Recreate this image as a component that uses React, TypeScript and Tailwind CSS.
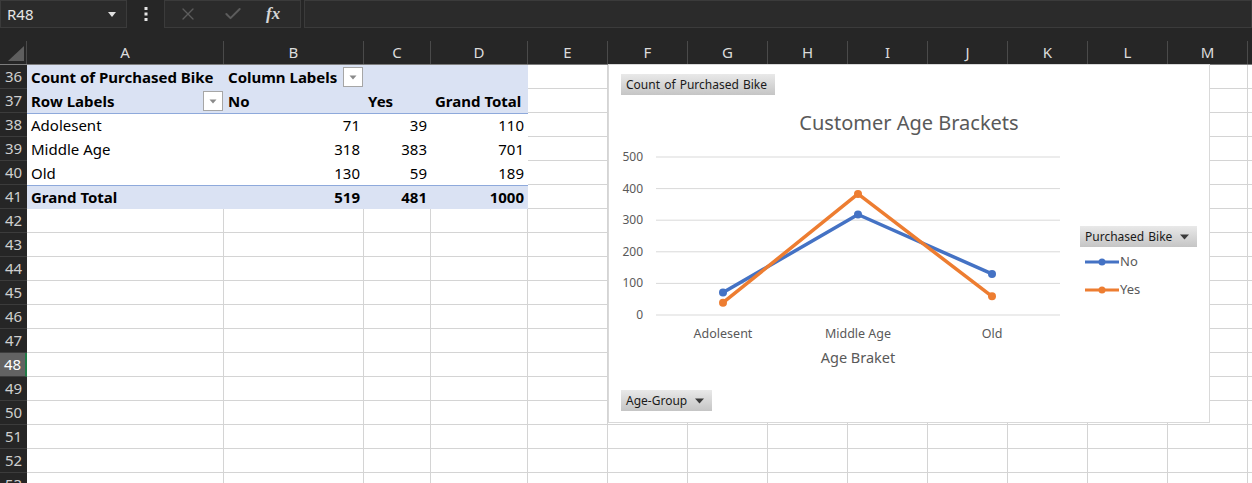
import React from 'react';
import { X, Check } from 'lucide-react';

const COLS = [
  { key: 'A', w: 197 },
  { key: 'B', w: 140 },
  { key: 'C', w: 67 },
  { key: 'D', w: 97 },
  { key: 'E', w: 80 },
  { key: 'F', w: 80 },
  { key: 'G', w: 80 },
  { key: 'H', w: 80 },
  { key: 'I', w: 80 },
  { key: 'J', w: 80 },
  { key: 'K', w: 80 },
  { key: 'L', w: 80 },
  { key: 'M', w: 80 },
  { key: '', w: 80 },
];

const FONT = { fontFamily: '"Noto Sans", "Open Sans", sans-serif' };

const pivotData = [
  { label: 'Adolesent', no: 71, yes: 39, total: 110 },
  { label: 'Middle Age', no: 318, yes: 383, total: 701 },
  { label: 'Old', no: 130, yes: 59, total: 189 },
];

const DropBox: React.FC = () => (
  <span className="flex h-[20px] w-[20px] shrink-0 items-center justify-center border border-[#a6a6a6] bg-white">
    <svg width="8" height="5" viewBox="0 0 8 5">
      <path d="M0.5 0.5 L7.5 0.5 L4 4.5 Z" fill="#8a8a8a" />
    </svg>
  </span>
);

const RowHeader: React.FC<{ n: number }> = ({ n }) => {
  const active = n === 48;
  return (
    <div
      className={`flex h-[24px] w-[27px] shrink-0 items-center justify-center border-b border-[#3c3c3c] text-[15px] ${
        active ? 'border-r-2 border-r-[#1f7a45] bg-[#626262] text-white' : 'bg-[#262626] text-[#cfcfcf]'
      }`}
    >
      {n}
    </div>
  );
};

const EmptyCells: React.FC<{ from: number }> = ({ from }) => (
  <>
    {COLS.slice(from).map((c, i) => (
      <div key={i} className="h-[24px] shrink-0 border-r border-b border-[#d4d4d4] bg-white" style={{ width: c.w }} />
    ))}
  </>
);

const PivotRow: React.FC<{ n: number; variant: 'head' | 'body' | 'total'; topLine?: boolean; children: React.ReactNode }> = ({
  n,
  variant,
  topLine,
  children,
}) => (
  <div className="flex">
    <RowHeader n={n} />
    <div
      className={`flex h-[24px] w-[501px] shrink-0 items-center whitespace-nowrap text-[15px] text-black ${
        variant === 'body' ? 'bg-white' : 'bg-[#dae2f3]'
      } ${variant !== 'body' ? 'font-bold' : ''} ${topLine ? 'border-t border-[#8ea9db]' : ''}`}
    >
      {children}
    </div>
    <EmptyCells from={4} />
  </div>
);

const ChartButton: React.FC<{ label: string; arrow?: boolean; className?: string }> = ({ label, arrow, className }) => (
  <div
    className={`flex h-[21px] items-center justify-between whitespace-nowrap bg-gradient-to-b from-[#e9e9e9] to-[#c5c5c5] pl-[5px] text-[12px] text-[#1a1a1a] [word-spacing:1px] ${className ?? ''}`}
  >
    <span>{label}</span>
    {arrow && (
      <svg className="mr-[8px] shrink-0" width="9" height="6" viewBox="0 0 9 6">
        <path d="M0 0.5 L9 0.5 L4.5 5.5 Z" fill="#3a3a3a" />
      </svg>
    )}
  </div>
);

const CustomerChart: React.FC = () => {
  const y = (v: number) => 180 - v * 0.316;
  const xs = [114, 249, 383];
  const no = [71, 318, 130];
  const yes = [39, 383, 59];
  const pts = (d: number[]) => d.map((v, i) => `${xs[i]},${y(v)}`).join(' ');

  return (
    <div className="absolute left-[608px] top-[64px] flex h-[359px] w-[602px] flex-col border border-[#d9d9d9] bg-white" style={FONT}>
      <div className="pl-[12px] pt-[9px]">
        <ChartButton label="Count of Purchased Bike" className="w-[154px]" />
      </div>
      <div className="mt-[16px] h-[24px] text-center text-[20px] leading-[24px] text-[#595959]">Customer Age Brackets</div>
      <div className="flex">
        <svg width="462" height="242" viewBox="0 0 462 242" className="shrink-0">
          {[0, 100, 200, 300, 400, 500].map((v) => (
            <g key={v}>
              <line x1="47" x2="451" y1={y(v)} y2={y(v)} stroke="#d9d9d9" strokeWidth="1" />
              <text x="34" y={y(v) + 4} textAnchor="end" fontSize="12" fill="#595959">
                {v}
              </text>
            </g>
          ))}
          <polyline points={pts(no)} fill="none" stroke="#4472c4" strokeWidth="3.5" strokeLinejoin="round" />
          <polyline points={pts(yes)} fill="none" stroke="#ed7d31" strokeWidth="3.5" strokeLinejoin="round" />
          {no.map((v, i) => (
            <circle key={`n${i}`} cx={xs[i]} cy={y(v)} r="4" fill="#4472c4" />
          ))}
          {yes.map((v, i) => (
            <circle key={`y${i}`} cx={xs[i]} cy={y(v)} r="4" fill="#ed7d31" />
          ))}
          {['Adolesent', 'Middle Age', 'Old'].map((c, i) => (
            <text key={c} x={xs[i]} y="203" textAnchor="middle" fontSize="12.5" fill="#595959">
              {c}
            </text>
          ))}
          <text x="249" y="228" textAnchor="middle" fontSize="14.5" fill="#595959">
            Age Braket
          </text>
        </svg>
        <div className="ml-[9px] pt-[91px]">
          <ChartButton label="Purchased Bike" arrow className="w-[117px]" />
          <div className="mt-[1px] flex h-[28px] items-center text-[13px] text-[#595959]">
            <svg width="38" height="10" viewBox="0 0 38 10" className="ml-[5px]">
              <line x1="0" x2="34" y1="5" y2="5" stroke="#4472c4" strokeWidth="3" />
              <circle cx="17" cy="5" r="3.5" fill="#4472c4" />
            </svg>
            <span className="-ml-[3px]">No</span>
          </div>
          <div className="flex h-[28px] items-center text-[13px] text-[#595959]">
            <svg width="38" height="10" viewBox="0 0 38 10" className="ml-[5px]">
              <line x1="0" x2="34" y1="5" y2="5" stroke="#ed7d31" strokeWidth="3" />
              <circle cx="17" cy="5" r="3.5" fill="#ed7d31" />
            </svg>
            <span className="-ml-[3px]">Yes</span>
          </div>
        </div>
      </div>
      <div className="mt-[13px] pl-[12px]">
        <ChartButton label="Age-Group" arrow className="w-[91px]" />
      </div>
    </div>
  );
};

const App: React.FC = () => {
  const emptyRows = Array.from({ length: 12 }, (_, i) => 42 + i);

  return (
    <div className="relative h-[483px] w-[1252px] overflow-hidden bg-[#262626]" style={FONT}>
      {/* formula bar */}
      <div className="flex h-[41px] items-start">
        <div className="flex h-[28px] w-[127px] items-center justify-between border border-[#3b3b3b] bg-[#2b2b2b] pl-[6px] pr-[10px] text-[15px] text-[#e6e6e6]">
          <span>R48</span>
          <svg width="8" height="5" viewBox="0 0 8 5">
            <path d="M0 0 L8 0 L4 5 Z" fill="#e0e0e0" />
          </svg>
        </div>
        <div className="flex h-[28px] w-[37px] items-center justify-center">
          <svg width="4" height="16" viewBox="0 0 4 16">
            <rect x="0.5" y="1" width="3" height="3" fill="#e6e6e6" />
            <rect x="0.5" y="6.5" width="3" height="3" fill="#e6e6e6" />
            <rect x="0.5" y="12" width="3" height="3" fill="#e6e6e6" />
          </svg>
        </div>
        <div className="flex h-[28px] w-[137px] items-center border border-[#3b3b3b] bg-[#2b2b2b]">
          <X className="ml-[13px] h-[20px] w-[20px] text-[#5c5c5c]" strokeWidth={1.6} />
          <Check className="ml-[25px] h-[20px] w-[20px] text-[#5c5c5c]" strokeWidth={2.4} />
          <span className="ml-[23px] text-[17px] font-bold italic text-[#d6d6d6]" style={{ fontFamily: '"Liberation Serif", serif' }}>
            fx
          </span>
        </div>
        <div className="ml-[3px] h-[28px] flex-1 border border-[#3b3b3b] bg-[#2b2b2b]" />
      </div>

      {/* column headers */}
      <div className="flex h-[24px] border-b border-[#7d7d7d]">
        <div className="relative w-[27px] shrink-0 border-r border-[#4a4a4a]">
          <svg className="absolute left-[8px] top-[5px]" width="17" height="16" viewBox="0 0 17 16">
            <path d="M16 0 L16 15 L0 15 Z" fill="#5e5e5e" />
          </svg>
        </div>
        {COLS.map((c, i) => (
          <div
            key={i}
            className="flex shrink-0 items-center justify-center border-r border-[#4a4a4a] text-[15px] text-[#dcdcdc]"
            style={{ width: c.w }}
          >
            {c.key}
          </div>
        ))}
      </div>

      {/* pivot table rows */}
      <PivotRow n={36} variant="head">
        <div className="w-[197px] pl-[4px]">Count of Purchased Bike</div>
        <div className="flex w-[140px] items-center justify-between pl-[4px] pr-[1px]">
          <span>Column Labels</span>
          <DropBox />
        </div>
      </PivotRow>
      <PivotRow n={37} variant="head">
        <div className="flex w-[197px] items-center justify-between pl-[4px] pr-[1px]">
          <span>Row Labels</span>
          <DropBox />
        </div>
        <div className="w-[140px] pl-[4px]">No</div>
        <div className="w-[67px] pl-[4px]">Yes</div>
        <div className="w-[97px] pl-[4px]">Grand Total</div>
      </PivotRow>
      {pivotData.map((r, i) => (
        <PivotRow key={r.label} n={38 + i} variant="body" topLine={i === 0}>
          <div className="w-[197px] pl-[4px]">{r.label}</div>
          <div className="w-[140px] pr-[4px] text-right">{r.no}</div>
          <div className="w-[67px] pr-[4px] text-right">{r.yes}</div>
          <div className="w-[97px] pr-[4px] text-right">{r.total}</div>
        </PivotRow>
      ))}
      <PivotRow n={41} variant="total" topLine>
        <div className="w-[197px] pl-[4px]">Grand Total</div>
        <div className="w-[140px] pr-[4px] text-right">519</div>
        <div className="w-[67px] pr-[4px] text-right">481</div>
        <div className="w-[97px] pr-[4px] text-right">1000</div>
      </PivotRow>

      {/* empty rows */}
      {emptyRows.map((n) => (
        <div key={n} className="flex">
          <RowHeader n={n} />
          <EmptyCells from={0} />
        </div>
      ))}

      <CustomerChart />
    </div>
  );
};

export default App;
